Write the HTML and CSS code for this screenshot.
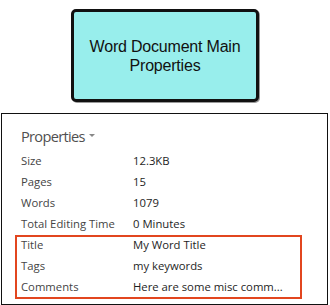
FILE: index.html
```html
<!DOCTYPE html>
<html lang="en">
<head>
    <meta charset="UTF-8">
    <title>Word Document Main Properties</title>
    <link rel="stylesheet" href="styles.css">
</head>
<body>
    <div class="callout">
        <div class="callout-text">Word Document Main<br>Properties</div>
    </div>

    <div class="panel">
        <div class="panel-title">Properties <span class="caret"></span></div>
        <div class="row"><span class="label">Size</span><span class="value">12.3KB</span></div>
        <div class="row"><span class="label">Pages</span><span class="value">15</span></div>
        <div class="row"><span class="label">Words</span><span class="value">1079</span></div>
        <div class="row"><span class="label">Total Editing Time</span><span class="value">0 Minutes</span></div>
        <div class="highlight">
            <div class="row"><span class="label">Title</span><span class="value">My Word Title</span></div>
            <div class="row"><span class="label">Tags</span><span class="value">my keywords</span></div>
            <div class="row"><span class="label">Comments</span><span class="value">Here are some misc comm...</span></div>
        </div>
    </div>
</body>
</html>
```

FILE: styles.css
```css
* {
    box-sizing: border-box;
}
body {
    margin: 0;
    background: #fff;
    font-family: "Open Sans", "Noto Sans", sans-serif;
}
.callout {
    margin: 9px 0 0 71px;
    width: 188px;
    height: 93px;
    border: 3px solid #111;
    border-radius: 5px;
    background: #98eeec;
    box-shadow: 1px 1px 0 #999;
    display: flex;
    align-items: center;
    justify-content: center;
}
.callout-text {
    font-family: "Liberation Sans", Arial, sans-serif;
    font-size: 16px;
    line-height: 19px;
    text-align: center;
    color: #111;
    letter-spacing: -0.2px;
}
.panel {
    margin: 11px 0 0 1px;
    width: 327px;
    height: 192px;
    border: 1px solid #111;
}
.panel-title {
    padding: 12px 0 0 19px;
    height: 36px;
    font-size: 14.6px;
    line-height: 20px;
    letter-spacing: -0.7px;
    color: #505050;
}
.caret {
    display: inline-block;
    vertical-align: middle;
    margin-left: 1px;
    margin-top: -6px;
    border-left: 3px solid transparent;
    border-right: 3px solid transparent;
    border-top: 3px solid #888;
}
.row {
    display: flex;
    height: 21px;
    padding-left: 19px;
    font-size: 11.3px;
    line-height: 21px;
    white-space: nowrap;
}
.label {
    width: 112px;
    color: #444;
}
.value {
    color: #1e1e1e;
}
.highlight {
    position: relative;
}
.highlight::after {
    content: "";
    position: absolute;
    top: 1px;
    bottom: -2px;
    left: 13px;
    width: 283px;
    border: 2px solid #e2461f;
}
```
